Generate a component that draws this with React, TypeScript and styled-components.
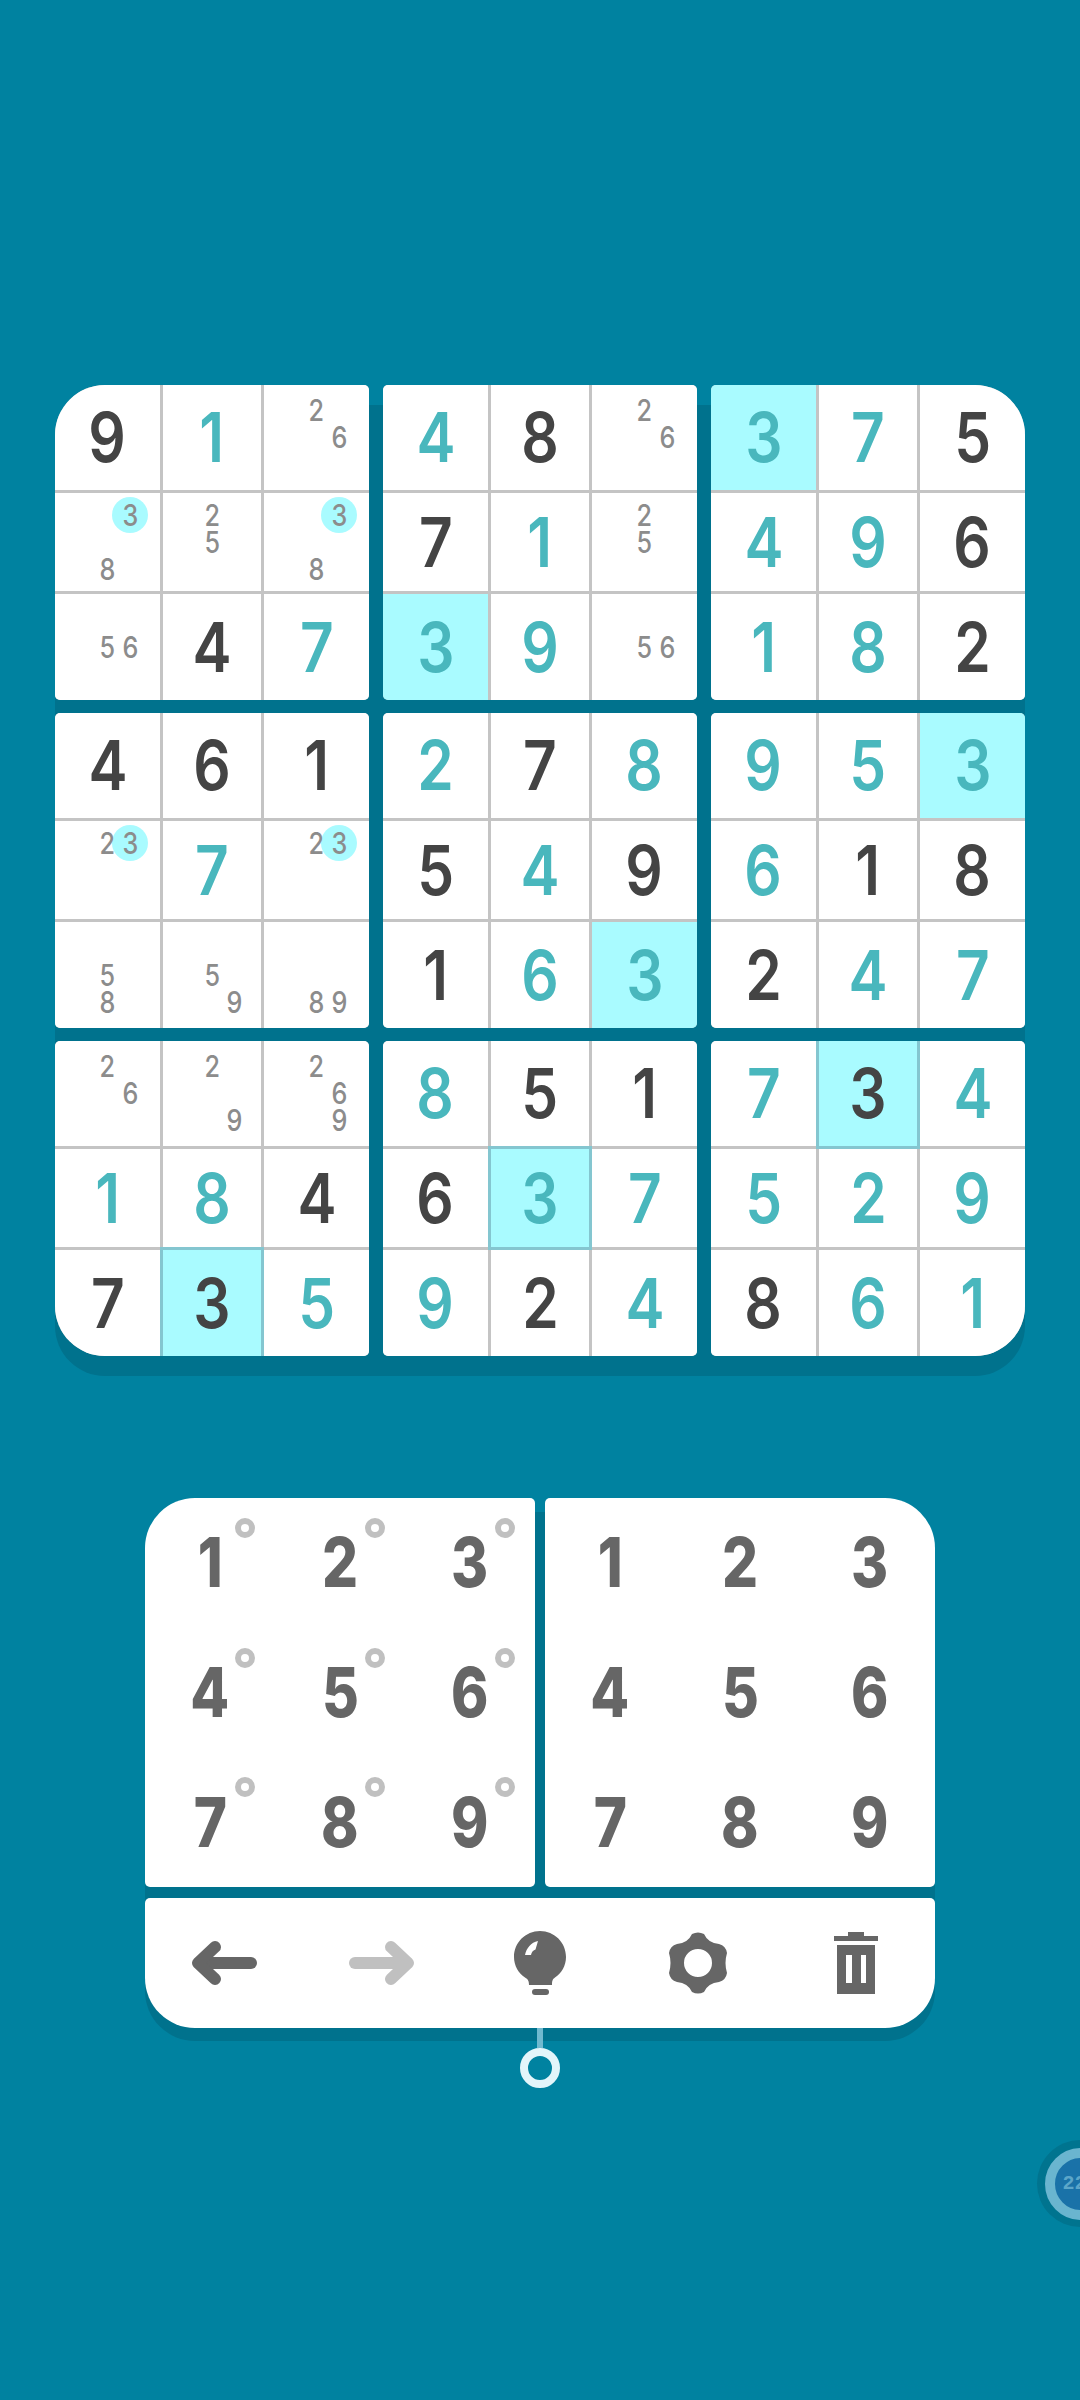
import React from "react";
import styled, { createGlobalStyle } from "styled-components";

const BG = "#0082a0";
const SHADOW = "#00728d";
const DIGIT_FONT = `Inter, "Noto Sans", sans-serif`;

const GlobalStyle = createGlobalStyle`
  html, body {
    margin: 0;
    padding: 0;
    background: ${BG};
  }
`;

const Page = styled.div`
  position: relative;
  width: 1080px;
  height: 2400px;
  padding-top: 385px;
  box-sizing: border-box;
  overflow: hidden;
  background: ${BG};
  display: flex;
  flex-direction: column;
  align-items: center;
`;

const Board = styled.div`
  position: relative;
  isolation: isolate;
  width: 970px;
  display: grid;
  grid-template-columns: repeat(3, 314px);
  grid-template-rows: repeat(3, 315px);
  column-gap: 14px;
  row-gap: 13px;

  &::before {
    content: "";
    position: absolute;
    inset: 20px 0 -20px;
    border-radius: 50px;
    background: ${SHADOW};
    z-index: -1;
  }
`;

type Corner = "tl" | "tr" | "bl" | "br" | "";

const cornerRadius = (corner: Corner) =>
  [
    corner === "tl" ? 50 : 5,
    corner === "tr" ? 50 : 5,
    corner === "br" ? 50 : 5,
    corner === "bl" ? 50 : 5,
  ]
    .map((r) => `${r}px`)
    .join(" ");

const Block = styled.div<{ $corner: Corner }>`
  display: grid;
  grid-template-columns: 105px 98px 105px;
  grid-template-rows: 105px 98px 106px;
  gap: 3px;
  background: #c4c4c4;
  overflow: hidden;
  border-radius: ${(p) => cornerRadius(p.$corner)};
`;

const Cell = styled.div<{ $lit?: boolean; $edged?: boolean }>`
  position: relative;
  isolation: isolate;
  display: flex;
  align-items: center;
  justify-content: center;
  background: ${(p) => (p.$lit ? "#a9fbff" : "#fff")};
  box-shadow: ${(p) => (p.$edged ? "0 0 0 3px #84c6d0" : "none")};
`;

const Digit = styled.span<{ $tone: "given" | "user" }>`
  display: block;
  font-family: ${DIGIT_FONT};
  font-size: 69px;
  font-weight: 600;
  line-height: 1;
  transform: scaleX(0.85);
  color: ${(p) => (p.$tone === "given" ? "#444444" : "#49b7bd")};
`;

const Marks = styled.div`
  display: grid;
  grid-template-columns: repeat(3, 22.5px);
  grid-template-rows: repeat(3, 27px);
`;

const Mark = styled.span<{ $n: number; $hit?: boolean }>`
  position: relative;
  grid-column: ${(p) => ((p.$n - 1) % 3) + 1};
  grid-row: ${(p) => Math.floor((p.$n - 1) / 3) + 1};
  display: flex;
  align-items: center;
  justify-content: center;
  font-family: ${DIGIT_FONT};
  font-size: 30px;
  font-weight: 500;
  line-height: 27px;
  color: #8c8c8c;

  &::before {
    content: "";
    display: ${(p) => (p.$hit ? "block" : "none")};
    position: absolute;
    left: -7px;
    top: -5px;
    width: 36px;
    height: 36px;
    border-radius: 50%;
    background: #a9fbff;
    z-index: -1;
  }
`;

const MarkGlyph = styled.span`
  display: block;
  transform: scaleX(0.84);
`;

const Controls = styled.div`
  position: relative;
  isolation: isolate;
  width: 790px;
  margin-top: 142px;
  display: flex;
  flex-direction: column;
  gap: 11px;

  &::before {
    content: "";
    position: absolute;
    inset: 14px 0 -13px;
    border-radius: 50px;
    background: ${SHADOW};
    z-index: -1;
  }
`;

const PadRow = styled.div`
  display: grid;
  grid-template-columns: 390px 390px;
  column-gap: 10px;
`;

const Pad = styled.div<{ $side: "left" | "right" }>`
  height: 389px;
  display: grid;
  grid-template-columns: repeat(3, 1fr);
  grid-template-rows: repeat(3, 1fr);
  background: #fff;
  border-radius: ${(p) => (p.$side === "left" ? "50px 5px 5px 5px" : "5px 50px 5px 5px")};
`;

const PadKey = styled.div`
  position: relative;
  display: flex;
  align-items: center;
  justify-content: center;
`;

const PadDigit = styled.span`
  display: block;
  font-family: ${DIGIT_FONT};
  font-size: 69px;
  font-weight: 800;
  line-height: 1;
  transform: scaleX(0.82);
  color: #666666;
`;

const NoteRing = styled.span`
  position: absolute;
  left: 90px;
  top: 20px;
  width: 20px;
  height: 20px;
  box-sizing: border-box;
  border: 6px solid #c0c0c0;
  border-radius: 50%;
`;

const ActionBar = styled.div`
  height: 130px;
  display: grid;
  grid-template-columns: repeat(5, 1fr);
  background: #fff;
  border-radius: 5px 5px 50px 50px;
`;

const Action = styled.div`
  display: flex;
  align-items: center;
  justify-content: center;
`;

const Pin = styled.div`
  position: relative;
  display: flex;
  flex-direction: column;
  align-items: center;
`;

const PinStem = styled.div`
  width: 6px;
  height: 20px;
  background: #70b9cf;
`;

const PinRing = styled.div`
  width: 40px;
  height: 40px;
  box-sizing: border-box;
  border: 8px solid #e3f5fa;
  border-radius: 50%;
`;

const TimerHalo = styled.div`
  position: absolute;
  left: 1037px;
  top: 2140px;
  width: 87px;
  height: 87px;
  border-radius: 50%;
  background: #00748f;
  display: flex;
  align-items: center;
  justify-content: center;
`;

const TimerFace = styled.div`
  width: 72px;
  height: 72px;
  box-sizing: border-box;
  border: 10px solid #6ab5cf;
  border-radius: 50%;
  background: #1a72a8;
  padding-left: 8px;
  display: flex;
  align-items: center;
  justify-content: flex-start;
  font-family: "Liberation Mono", monospace;
  font-size: 20px;
  font-weight: 700;
  color: #5ca6c9;
`;

type CellValue = string | number[];

// digit prefixed with "d" is a given, "u" is a filled in one, "*" marks a highlighted cell.
// arrays are pencil marks
const blocks: CellValue[][] = [
  ["d9", "u1", [2, 6], [3, 8], [2, 5], [3, 8], [5, 6], "d4", "u7"],
  ["u4", "d8", [2, 6], "d7", "u1", [2, 5], "u3*", "u9", [5, 6]],
  ["u3*", "u7", "d5", "u4", "u9", "d6", "u1", "u8", "d2"],
  ["d4", "d6", "d1", [2, 3], "u7", [2, 3], [5, 8], [5, 9], [8, 9]],
  ["u2", "d7", "u8", "d5", "u4", "d9", "d1", "u6", "u3*"],
  ["u9", "u5", "u3*", "u6", "d1", "d8", "d2", "u4", "u7"],
  [[2, 6], [2, 9], [2, 6, 9], "u1", "u8", "d4", "d7", "d3*", "u5"],
  ["u8", "d5", "d1", "d6", "u3*", "u7", "u9", "d2", "u4"],
  ["u7", "d3*", "u4", "u5", "u2", "u9", "d8", "u6", "u1"],
];

const corners: Corner[] = ["tl", "", "tr", "", "", "", "bl", "", "br"];
const digits = [1, 2, 3, 4, 5, 6, 7, 8, 9];

const renderCell = (value: CellValue, key: number) => {
  if (Array.isArray(value)) {
    return (
      <Cell key={key}>
        <Marks>
          {value.map((n) => (
            <Mark key={n} $n={n} $hit={n === 3}>
              <MarkGlyph>{n}</MarkGlyph>
            </Mark>
          ))}
        </Marks>
      </Cell>
    );
  }
  const lit = value.endsWith("*");
  return (
    <Cell key={key} $lit={lit} $edged={lit && key % 3 === 1}>
      <Digit $tone={value[0] === "d" ? "given" : "user"}>{value[1]}</Digit>
    </Cell>
  );
};

const ArrowIcon = ({ color, flip }: { color: string; flip?: boolean }) => (
  <svg
    width="66"
    height="44"
    viewBox="0 0 66 44"
    fill="none"
    stroke={color}
    strokeWidth="12"
    strokeLinecap="round"
    strokeLinejoin="round"
    transform={flip ? "scale(-1 1)" : undefined}
  >
    <path d="M60 22H8" />
    <path d="M24 6L7 22L24 38" />
  </svg>
);

const BulbIcon = () => (
  <svg width="52" height="64" viewBox="0 0 52 64">
    <path
      fill="#666"
      d="M26 0C40.4 0 52 11.6 52 26C52 35 47.5 42 41 46.5C38.5 48.2 38 50 38 54H15C15 50 14 48.2 11 46.5C4.5 42 0 35 0 26C0 11.6 11.6 0 26 0Z"
    />
    <rect x="18" y="58" width="17" height="6" rx="3" fill="#666" />
    <path
      fill="#fff"
      d="M24 10C17 11.5 12.5 17 11 24L17 24C17.5 21 19.5 19 21.5 18.5Z"
    />
  </svg>
);

const GearIcon = () => (
  <svg width="58" height="62" viewBox="0 0 58 62">
    <path
      fill="#666"
      fillRule="evenodd"
      d="M23 2Q29 -1 35 2Q39 11 50 12Q57 14 58 21Q55 31 58 41Q57 48 50 50Q39 51 35 60Q29 63 23 60Q19 51 8 50Q1 48 0 41Q3 31 0 21Q1 14 8 12Q19 11 23 2ZM29 17A14 14 0 1 0 29 45A14 14 0 1 0 29 17Z"
    />
  </svg>
);

const TrashIcon = () => (
  <svg width="44" height="62" viewBox="0 0 44 62">
    <path
      fill="#666"
      fillRule="evenodd"
      d="M14 0H30V4H44V9H0V4H14ZM3 13H41V62H3ZM12 23V51H18V23ZM27 23V51H32V23Z"
    />
  </svg>
);

export default function App() {
  return (
    <>
      <GlobalStyle />
      <Page>
        <Board>
          {blocks.map((cells, i) => (
            <Block key={i} $corner={corners[i]}>
              {cells.map(renderCell)}
            </Block>
          ))}
        </Board>

        <Controls>
          <PadRow>
            <Pad $side="left">
              {digits.map((n) => (
                <PadKey key={n}>
                  <PadDigit>{n}</PadDigit>
                  <NoteRing />
                </PadKey>
              ))}
            </Pad>
            <Pad $side="right">
              {digits.map((n) => (
                <PadKey key={n}>
                  <PadDigit>{n}</PadDigit>
                </PadKey>
              ))}
            </Pad>
          </PadRow>
          <ActionBar>
            <Action>
              <ArrowIcon color="#666" />
            </Action>
            <Action>
              <ArrowIcon color="#c0c0c0" flip />
            </Action>
            <Action>
              <BulbIcon />
            </Action>
            <Action>
              <GearIcon />
            </Action>
            <Action>
              <TrashIcon />
            </Action>
          </ActionBar>
        </Controls>

        <Pin>
          <PinStem />
          <PinRing />
        </Pin>

        <TimerHalo>
          <TimerFace>22</TimerFace>
        </TimerHalo>
      </Page>
    </>
  );
}
